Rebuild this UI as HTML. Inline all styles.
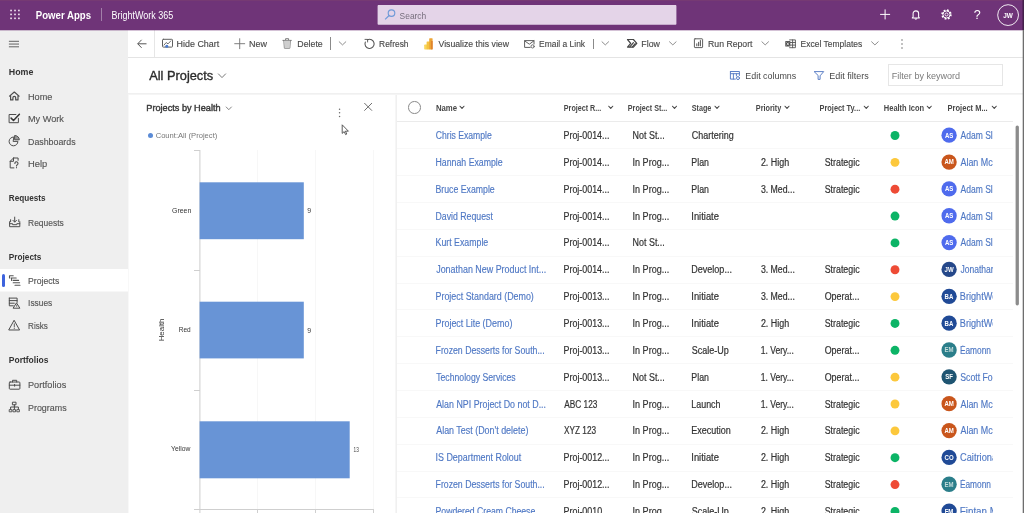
<!DOCTYPE html>
<html>
<head>
<meta charset="utf-8">
<title>All Projects</title>
<style>
*{box-sizing:border-box;margin:0;padding:0}
html,body{width:1024px;height:513px;overflow:hidden;background:#fff;font-family:"Liberation Sans",sans-serif;color:#444}
.a{position:absolute}
.t{position:absolute;white-space:nowrap;transform-origin:0 50%}
.clip{position:absolute;overflow:hidden}
svg{position:absolute;overflow:visible}
.dot{position:absolute;width:9px;height:9px;border-radius:50%}
.av{position:absolute;width:15.4px;height:15.4px;border-radius:50%;color:#fff;font-size:6.3px;font-weight:bold;display:flex;align-items:center;justify-content:center;letter-spacing:-0.25px;padding-top:0.6px}
.rs{position:absolute;left:397px;width:616px;height:1px;background:#f8f8f8}
.ch{position:absolute}
</style>
</head>
<body>
<!-- backgrounds -->
<div class="a" style="left:0;top:0;width:1024px;height:30px;background:#6f3478"></div>
<div class="a" style="left:0;top:30px;width:1024px;height:1px;background:rgba(111,52,120,0.3);z-index:3"></div>
<div class="a" style="left:0;top:30px;width:128px;height:483px;background:#efefef"></div>
<div class="a" style="left:128px;top:57px;width:896px;height:1px;background:#e4e4e4"></div>
<div class="a" style="left:128px;top:93px;width:896px;height:1px;background:#f0f0f0"></div>
<div class="a" style="left:128px;top:94px;width:896px;height:1px;background:#f5f5f5"></div>
<div class="a" style="left:128px;top:95px;width:1px;height:418px;background:#f8f8f8"></div>
<div class="a" style="left:395px;top:95px;width:1px;height:418px;background:#f6f6f6"></div>
<div class="a" style="left:396px;top:95px;width:1px;height:418px;background:#f0f0f0"></div>

<!-- right window edge -->
<div class="a" style="left:1023px;top:0;width:1px;height:30px;background:#43214a;z-index:5"></div>
<div class="a" style="left:1022px;top:0;width:1px;height:30px;background:rgba(40,10,45,0.3);z-index:5"></div>
<div class="a" style="left:1023px;top:30px;width:1px;height:483px;background:#6e6e6e;z-index:5"></div>
<div class="a" style="left:1022px;top:30px;width:1px;height:483px;background:rgba(110,110,110,0.3);z-index:5"></div>
<div class="a" style="left:0;top:0;width:1024px;height:1px;background:#763a73"></div>
<!-- HEADER shapes -->
<svg style="left:0;top:0" width="30" height="30" viewBox="0 0 30 30" fill="#f6ecf7"><rect x="10.25" y="9.70" width="1.6" height="1.6"/><rect x="14.20" y="9.70" width="1.6" height="1.6"/><rect x="18.10" y="9.70" width="1.6" height="1.6"/><rect x="10.25" y="13.60" width="1.6" height="1.6"/><rect x="14.20" y="13.60" width="1.6" height="1.6"/><rect x="18.10" y="13.60" width="1.6" height="1.6"/><rect x="10.25" y="17.55" width="1.6" height="1.6"/><rect x="14.20" y="17.55" width="1.6" height="1.6"/><rect x="18.10" y="17.55" width="1.6" height="1.6"/></svg>
<div class="a" style="left:101px;top:8px;width:1px;height:13px;background:#a27fa9"></div>
<svg style="left:377px;top:4px" width="301" height="22" viewBox="0 0 301 22"><rect x="0.6" y="1.1" width="298.8" height="19.6" rx="0.8" fill="#e4d4e8"/></svg>
<svg style="left:384px;top:8px" width="12" height="12" viewBox="0 0 12 12" fill="none" stroke="#6f9ad8" stroke-width="1.15"><circle cx="7.5" cy="5.1" r="3.3"/><path d="M5.1 7.5 L1.1 11.4"/></svg>
<svg style="left:879px;top:8px" width="13" height="13" viewBox="0 0 13 13" stroke="#fff" stroke-width="1" fill="none"><path d="M6.1 1.4V11.4M1.1 6.4H11.1"/></svg>
<svg style="left:910px;top:8px" width="12" height="13" viewBox="0 0 12 13" stroke="#fff" stroke-width="1.05" fill="none" stroke-linejoin="round"><path d="M3.1 9V5.6a2.75 2.75 0 0 1 5.5 0V9l0.8 0.9H2.3z"/><path d="M4.8 10.4a1.1 1.1 0 0 0 2.1 0"/></svg>
<svg style="left:940px;top:8px" width="13" height="13" viewBox="0 0 13 13" stroke="#fff" fill="none"><circle cx="6.5" cy="6.5" r="4.3" stroke-width="1.8" stroke-dasharray="1.7 1.68"/><circle cx="6.5" cy="6.5" r="3.6" stroke-width="1"/><circle cx="6.5" cy="6.5" r="1.5" stroke-width="0.9"/></svg>
<svg style="left:996px;top:3px" width="25" height="25" viewBox="0 0 25 25" fill="none" stroke="#fff" stroke-width="0.9"><circle cx="12.1" cy="12.1" r="10.4"/></svg>

<!-- SIDEBAR shapes -->
<svg style="left:8px;top:40px" width="13" height="9" viewBox="0 0 13 9" stroke="#5c5c5c" stroke-width="0.95"><path d="M0.9 1.3H11M0.9 4.05H11M0.9 6.8H11"/></svg>
<div class="a" style="left:0;top:269px;width:128px;height:22px;background:#fff"></div><div class="a" style="left:0;top:291px;width:128px;height:1px;background:#f7f7f7"></div>
<div class="a" style="left:2px;top:274px;width:3px;height:13px;background:#3d63dd;border-radius:1.5px"></div>
<svg style="left:9px;top:91px" width="12" height="12" viewBox="0 -0.2 12 12" stroke="#4d4d4d" stroke-width="1" fill="none" stroke-linejoin="round" stroke-linecap="round"><path d="M0.5 4.9L5.3 0.8L10.1 4.9M1.6 4.2V8.7H3.9V6.6A1.4 1.4 0 0 1 6.7 6.6V8.7H9V4.2" stroke-width="1.2"/></svg>
<svg style="left:8px;top:113px" width="14" height="13" viewBox="-0.5 -0.3 14 13" stroke="#4d4d4d" stroke-width="1" fill="none" stroke-linejoin="round" stroke-linecap="round"><path d="M9.9 5V9.4H0.6V1.2H7.4" stroke-width="1"/><path d="M2.6 4.8L5 7.2L10.9 1" stroke="#333" stroke-width="1.5"/></svg>
<svg style="left:8px;top:134px" width="14" height="14" viewBox="-0.7 -0.8 14 14" stroke="#4d4d4d" stroke-width="1" fill="none" stroke-linejoin="round" stroke-linecap="round"><path d="M4.8 2.2A4.4 4.4 0 1 0 9.2 6.6H4.8Z"/><path d="M6.3 0.7A4.3 4.3 0 0 1 10.6 5H6.3Z" fill="#999"/></svg>
<svg style="left:9px;top:157px" width="13" height="14" viewBox="-0.5 -0.3 13 14" stroke="#4d4d4d" stroke-width="1" fill="none" stroke-linejoin="round" stroke-linecap="round"><path d="M4 0.7H8.6V3M4 0.7L0.7 4V10.6H4.4M0.7 4H4V0.7"/><path d="M5.4 6.1A1.55 1.55 0 1 1 7.9 7.3C7.3 7.7 7 8 7 8.7M7 10.3V10.4" stroke-width="1.1"/></svg>
<svg style="left:9px;top:216px" width="13" height="13" viewBox="0 -0.5 13 13" stroke="#4d4d4d" stroke-width="1" fill="none" stroke-linejoin="round" stroke-linecap="round"><path d="M0.6 5.2V10.2H10.8V5.2M0.6 7.2H3.6V8.2H7.8V7.2H10.8M1.6 5.2V3.2M9.8 5.2V3.2"/><path d="M5.7 0.6V5.4M3.9 3.8L5.7 5.6L7.5 3.8"/></svg>
<svg style="left:9px;top:275px" width="13" height="13" viewBox="0 0 13 13" stroke="#555" stroke-width="1" fill="none" stroke-linejoin="round" stroke-linecap="round"><path d="M0.5 0.8H4.2M2 3H7.2M4.2 5.4H9.6M4.2 7.8H10.6M6 10.2H11M0.5 0.8V3M2.6 3V5.4" stroke-width="1.1"/></svg>
<svg style="left:8px;top:297px" width="14" height="14" viewBox="-0.7 -0.4 14 14" stroke="#4d4d4d" stroke-width="1" fill="none" stroke-linejoin="round" stroke-linecap="round"><path d="M0.6 0.7H8.4V5M0.6 0.7V8.4H4.6M0.6 3.2H8.4M0.6 5.8H5.6"/><path d="M8 5.8L11.2 10.8H4.8Z" fill="#efefef"/><path d="M8 7.6V9" stroke-width="0.8"/></svg>
<svg style="left:8px;top:319px" width="14" height="13" viewBox="-0.7 -0.8 14 13" stroke="#4d4d4d" stroke-width="1" fill="none" stroke-linejoin="round" stroke-linecap="round"><path d="M5.6 0.8L10.9 10.2H0.4Z"/><path d="M5.6 4V7.2M5.6 8.6V8.7" stroke-width="0.9"/></svg>
<svg style="left:8px;top:379px" width="14" height="12" viewBox="-0.7 -0.6 14 12" stroke="#4d4d4d" stroke-width="1" fill="none" stroke-linejoin="round" stroke-linecap="round"><rect x="0.6" y="2.4" width="10.6" height="7.2" rx="0.8"/><path d="M3.8 2.4V0.7H8V2.4M0.6 5.6H11.2M5.9 4.8V6.6"/></svg>
<svg style="left:9px;top:401px" width="13" height="13" viewBox="-0.2 -0.6 13 13" stroke="#4d4d4d" stroke-width="1" fill="none" stroke-linejoin="round" stroke-linecap="round"><rect x="3.6" y="0.6" width="3.2" height="2.6"/><path d="M5.2 3.2V5.4M1.4 7.6V5.4H9.2V7.6M5.2 5.4V7.6"/><path d="M0.4 8H2.6V10.2H0.4ZM4.1 8H6.3V10.2H4.1ZM8 8H10.2V10.2H8Z" stroke-width="0.9"/></svg>

<!-- COMMAND BAR shapes -->
<svg style="left:136.5px;top:39px" width="10" height="10" viewBox="0 0 10 10" stroke="#555" stroke-width="1" fill="none"><path d="M9.5 4.8H0.8M4.6 0.8L0.7 4.8L4.6 8.8"/></svg>
<div class="a" style="left:154px;top:30px;width:1px;height:27px;background:#e6e6e6"></div>
<div class="a" style="left:330px;top:37px;width:1px;height:13px;background:#8a8a8a"></div>
<div class="a" style="left:593px;top:39px;width:1px;height:10px;background:#8a8a8a"></div>
<svg style="left:162px;top:38px" width="12" height="11" viewBox="0 -0.7 12 11" stroke="#5f5f5f" stroke-width="1" fill="none" stroke-linejoin="round" stroke-linecap="round"><rect x="0.5" y="0.6" width="10" height="7.8" rx="0.8"/><path d="M2 6.4L4.2 3.8L6 5.2L8.8 2.2" stroke-width="0.9"/><circle cx="4.8" cy="7.6" r="1.5" fill="#4a7bd0" stroke="none"/></svg>
<svg style="left:234px;top:38px" width="12" height="12" viewBox="-0.4 -0.4 12 12" stroke="#707070" stroke-width="0.9" fill="none" stroke-linejoin="round" stroke-linecap="round"><path d="M5.3 0.3V10.3M0.3 5.3H10.3"/></svg>
<svg style="left:282px;top:37px" width="11" height="13" viewBox="-0.4 -0.8 11 13" stroke="#7a7a7a" stroke-width="1" fill="none" stroke-linejoin="round" stroke-linecap="round"><path d="M0.5 2.6H8.9M3.2 2.4V0.9H6.2V2.4M1.5 2.8L2 10.4H7.4L7.9 2.8" /><path d="M3.6 4.4V8.8M5.8 4.4V8.8" stroke-width="0.8"/><path d="M1.8 3H7.6L7.2 10.2H2.2Z" fill="#cfcfcf" stroke="none"/></svg>
<svg style="left:339px;top:41px" width="8" height="6" viewBox="-0 -0.6 8 6" stroke="#808080" stroke-width="0.9" fill="none" stroke-linejoin="round" stroke-linecap="round"><path d="M0.2 0.2L3.5 3.3000000000000003L6.8 0.2"/></svg>
<svg style="left:601px;top:41px" width="9" height="6" viewBox="-0.8 -0.6 9 6" stroke="#808080" stroke-width="0.9" fill="none" stroke-linejoin="round" stroke-linecap="round"><path d="M0.2 0.2L3.5 3.3000000000000003L6.8 0.2"/></svg>
<svg style="left:669px;top:41px" width="9" height="6" viewBox="-0.3 -0.6 9 6" stroke="#808080" stroke-width="0.9" fill="none" stroke-linejoin="round" stroke-linecap="round"><path d="M0.2 0.2L3.5 3.3000000000000003L6.8 0.2"/></svg>
<svg style="left:761px;top:41px" width="9" height="6" viewBox="-0.7 -0.6 9 6" stroke="#808080" stroke-width="0.9" fill="none" stroke-linejoin="round" stroke-linecap="round"><path d="M0.2 0.2L3.5 3.3000000000000003L6.8 0.2"/></svg>
<svg style="left:871px;top:41px" width="9" height="6" viewBox="-0.4 -0.6 9 6" stroke="#808080" stroke-width="0.9" fill="none" stroke-linejoin="round" stroke-linecap="round"><path d="M0.2 0.2L3.5 3.3000000000000003L6.8 0.2"/></svg>
<svg style="left:364px;top:38px" width="12" height="13" viewBox="0 -0.2 12 13" stroke="#555" stroke-width="1.1" fill="none" stroke-linejoin="round" stroke-linecap="round"><path d="M3.4 1.6A4.6 4.6 0 1 1 1.3 3.9" /><path d="M1 1.2H3.6V3.8" stroke-width="0.9"/></svg>
<svg style="left:424px;top:37.6px" width="9" height="11.6" viewBox="0 0 9 11.6"><rect x="0.2" y="6.6" width="3.2" height="4.8" rx="0.6" fill="#f9d65c"/><rect x="2.6" y="3.4" width="3.4" height="8" rx="0.6" fill="#f5c341"/><rect x="5.2" y="0.2" width="3.4" height="11.2" rx="0.6" fill="#eda534"/><rect x="7.2" y="3" width="1.4" height="8.4" fill="#dc7d2c"/></svg>
<svg style="left:524px;top:40px" width="12" height="10" viewBox="0 0 12 10" stroke="#5f5f5f" stroke-width="1" fill="none" stroke-linejoin="round" stroke-linecap="round"><path d="M10 4V0.6H0.6V7.4H6.2M0.6 0.8L5.3 4.2L10 0.8"/><circle cx="8.6" cy="6.4" r="1.6" fill="#fff" stroke-width="0.9"/></svg>
<svg style="left:626px;top:38px" width="13" height="11" viewBox="-0.8 -0.8 13 11" stroke="#454545" stroke-width="1.2" fill="none" stroke-linejoin="round" stroke-linecap="round"><path d="M0.7 0.7H6.6L10 4.5L6.6 8.3H0.7L3.9 4.5Z"/><path d="M3 8L6.6 3.8M5.6 8L8.4 4.8" /></svg>
<svg style="left:693px;top:38px" width="12" height="12" viewBox="-0.8 -0.2 12 12" stroke="#5f5f5f" stroke-width="1" fill="none" stroke-linejoin="round" stroke-linecap="round"><rect x="0.6" y="0.6" width="8.2" height="8.8" rx="0.6"/><path d="M3 7.6V5.6M4.8 7.6V4M6.6 7.6V2.4" stroke-width="1.1"/></svg>
<svg style="left:785px;top:39px" width="12" height="11" viewBox="0 -0.3 12 11" stroke="#555" stroke-width="1" fill="none" stroke-linejoin="round" stroke-linecap="round"><path d="M4.6 0.6H10.4V8.4H4.6M4.6 3.2H10.4M4.6 5.8H10.4M7.6 0.6V8.4" stroke-width="0.9"/><rect x="0.3" y="1.8" width="5" height="5.4" fill="#4a4a4a" stroke="none"/><path d="M1.8 3.4L3.8 5.8M3.8 3.4L1.8 5.8" stroke="#fff" stroke-width="0.7"/></svg>
<svg style="left:901px;top:38.6px" width="2" height="10" viewBox="0 0 2 10" fill="#666"><circle cx="1" cy="1" r="0.75"/><circle cx="1" cy="5" r="0.75"/><circle cx="1" cy="9" r="0.75"/></svg>

<!-- TITLE shapes -->
<div class="a" style="left:888px;top:64px;width:115px;height:22px;border:1px solid #e6e6e6;background:#fff"></div>
<svg style="left:218px;top:73px" width="9" height="6" viewBox="-0.2 -0.7 9 6" stroke="#6a6a6a" stroke-width="0.9" fill="none" stroke-linejoin="round" stroke-linecap="round"><path d="M0.2 0.2L3.8 3.9000000000000004L7.3999999999999995 0.2"/></svg>
<svg style="left:729px;top:70px" width="13" height="12" viewBox="-0.8 -0.9 13 12" stroke="#5d80c6" stroke-width="1" fill="none" stroke-linejoin="round" stroke-linecap="round"><path d="M0.6 0.6H9.6V4.6M0.6 0.6V8.2H5.6M0.6 2.8H9.6M3.6 2.8V8.2M6.6 2.8V5"/><circle cx="8.2" cy="7.2" r="1.5"/></svg>
<svg style="left:813px;top:71px" width="13" height="11" viewBox="-0.9 0 13 11" stroke="#5d80c6" stroke-width="1" fill="none" stroke-linejoin="round" stroke-linecap="round"><path d="M0.6 0.6H9.8L6.2 4.8V8.4H4.2V4.8Z"/></svg>

<!-- CHART -->
<div class="a" style="left:257px;top:150px;width:1px;height:359px;background:#f7f7f7"></div>
<div class="a" style="left:315px;top:150px;width:1px;height:359px;background:#f7f7f7"></div>
<div class="a" style="left:373px;top:150px;width:1px;height:359px;background:#f7f7f7"></div>
<svg style="left:190px;top:150px" width="20" height="363" viewBox="0 0 20 363"><rect x="9.4" y="0" width="1" height="363" fill="#cecece"/></svg>
<div class="a" style="left:194px;top:150px;width:6px;height:1px;background:#cfcfcf"></div>
<div class="a" style="left:194px;top:270px;width:6px;height:1px;background:#cfcfcf"></div>
<div class="a" style="left:194px;top:390px;width:6px;height:1px;background:#cfcfcf"></div>
<div class="a" style="left:194px;top:509px;width:180px;height:1px;background:#cfcfcf"></div>
<div class="a" style="left:257px;top:509px;width:1px;height:4px;background:#cfcfcf"></div>
<div class="a" style="left:315px;top:509px;width:1px;height:4px;background:#cfcfcf"></div>
<div class="a" style="left:373px;top:509px;width:1px;height:4px;background:#cfcfcf"></div>
<svg style="left:0;top:0" width="400" height="513" viewBox="0 0 400 513"><g fill="#6894d6"><rect x="199.6" y="182.3" width="104.2" height="56.9"/><rect x="199.6" y="301.7" width="104.2" height="56.7"/><rect x="199.6" y="421.3" width="150.1" height="57"/></g></svg>
<div class="a" style="left:147.5px;top:132.5px;width:5px;height:5px;border-radius:50%;background:#5b8bd6"></div>
<svg style="left:226px;top:106px" width="7" height="5" viewBox="-0 -0.8 7 5" stroke="#777" stroke-width="0.9" fill="none" stroke-linejoin="round" stroke-linecap="round"><path d="M0.2 0.2L2.8 2.9000000000000004L5.3999999999999995 0.2"/></svg>
<svg style="left:338px;top:108px" width="4" height="10" viewBox="0 0 4 10" fill="#6a6a6a"><circle cx="1.55" cy="1.35" r="0.75"/><circle cx="1.55" cy="4.8" r="0.75"/><circle cx="1.55" cy="8.4" r="0.75"/></svg>
<svg style="left:364px;top:103px" width="9" height="9" viewBox="-0.4 -0.1 9 9" stroke="#666" stroke-width="0.95" fill="none" stroke-linejoin="round" stroke-linecap="round"><path d="M0.2 0.2L7.3 7.3M7.3 0.2L0.2 7.3"/></svg>
<svg style="left:341px;top:124px" width="10" height="13" viewBox="-0.6 -0.6 10 13" stroke="#4a4a4a" stroke-width="0.9" fill="none" stroke-linejoin="round" stroke-linecap="round"><path d="M0.6 0.6V8.8L2.6 7L4 10L5.2 9.4L3.8 6.6H6.4Z" fill="#fff"/></svg>

<!-- GRID -->
<div class="a" style="left:397px;top:121px;width:616px;height:1px;background:#ebebeb"></div>
<div class="a" style="left:408px;top:101px;width:12.6px;height:12.6px;border:1px solid #8a8a8a;border-radius:50%"></div>
<svg style="left:1014px;top:124px" width="6" height="184" viewBox="0 0 6 184"><rect x="1.6" y="1.4" width="3.3" height="180" rx="1.6" fill="#8c8c8c"/></svg>
<svg style="left:459px;top:106px" width="7" height="4" viewBox="-0.8 -0.05 7 4" stroke="#444" stroke-width="1.1" fill="none" stroke-linejoin="round" stroke-linecap="round"><path d="M0.2 0.2L2.2 2.4000000000000004L4.2 0.2"/></svg>
<svg style="left:608px;top:106px" width="6" height="4" viewBox="-0.55 -0.05 6 4" stroke="#444" stroke-width="1.1" fill="none" stroke-linejoin="round" stroke-linecap="round"><path d="M0.2 0.2L2.2 2.4000000000000004L4.2 0.2"/></svg>
<svg style="left:672px;top:106px" width="6" height="4" viewBox="-0.3 -0.05 6 4" stroke="#444" stroke-width="1.1" fill="none" stroke-linejoin="round" stroke-linecap="round"><path d="M0.2 0.2L2.2 2.4000000000000004L4.2 0.2"/></svg>
<svg style="left:714px;top:106px" width="7" height="4" viewBox="-0.8 -0.05 7 4" stroke="#444" stroke-width="1.1" fill="none" stroke-linejoin="round" stroke-linecap="round"><path d="M0.2 0.2L2.2 2.4000000000000004L4.2 0.2"/></svg>
<svg style="left:784px;top:106px" width="7" height="4" viewBox="-0.8 -0.05 7 4" stroke="#444" stroke-width="1.1" fill="none" stroke-linejoin="round" stroke-linecap="round"><path d="M0.2 0.2L2.2 2.4000000000000004L4.2 0.2"/></svg>
<svg style="left:864px;top:106px" width="6" height="4" viewBox="-0.05 -0.05 6 4" stroke="#444" stroke-width="1.1" fill="none" stroke-linejoin="round" stroke-linecap="round"><path d="M0.2 0.2L2.2 2.4000000000000004L4.2 0.2"/></svg>
<svg style="left:927px;top:106px" width="6" height="4" viewBox="-0.05 -0.05 6 4" stroke="#444" stroke-width="1.1" fill="none" stroke-linejoin="round" stroke-linecap="round"><path d="M0.2 0.2L2.2 2.4000000000000004L4.2 0.2"/></svg>
<svg style="left:992px;top:106px" width="6" height="4" viewBox="-0.05 -0.05 6 4" stroke="#444" stroke-width="1.1" fill="none" stroke-linejoin="round" stroke-linecap="round"><path d="M0.2 0.2L2.2 2.4000000000000004L4.2 0.2"/></svg>
<div class="rs" style="top:148px"></div>
<div class="rs" style="top:175px"></div>
<div class="rs" style="top:202px"></div>
<div class="rs" style="top:229px"></div>
<div class="rs" style="top:256px"></div>
<div class="rs" style="top:283px"></div>
<div class="rs" style="top:309px"></div>
<div class="rs" style="top:336px"></div>
<div class="rs" style="top:363px"></div>
<div class="rs" style="top:390px"></div>
<div class="rs" style="top:417px"></div>
<div class="rs" style="top:444px"></div>
<div class="rs" style="top:471px"></div>
<div class="rs" style="top:497px"></div>
<svg style="left:0;top:0" width="1024" height="513" viewBox="0 0 1024 513"><circle cx="895" cy="135.50" r="4.45" fill="#0cb466"/><circle cx="949.1" cy="135.20" r="7.65" fill="#4f6bed"/><circle cx="895" cy="162.35" r="4.45" fill="#fcc83c"/><circle cx="949.1" cy="162.05" r="7.65" fill="#c9561c"/><circle cx="895" cy="189.20" r="4.45" fill="#ee4b35"/><circle cx="949.1" cy="188.90" r="7.65" fill="#4f6bed"/><circle cx="895" cy="216.05" r="4.45" fill="#0cb466"/><circle cx="949.1" cy="215.75" r="7.65" fill="#4f6bed"/><circle cx="895" cy="242.90" r="4.45" fill="#0cb466"/><circle cx="949.1" cy="242.60" r="7.65" fill="#4f6bed"/><circle cx="895" cy="269.75" r="4.45" fill="#ee4b35"/><circle cx="949.1" cy="269.45" r="7.65" fill="#25488a"/><circle cx="895" cy="296.60" r="4.45" fill="#fcc83c"/><circle cx="949.1" cy="296.30" r="7.65" fill="#204a96"/><circle cx="895" cy="323.45" r="4.45" fill="#0cb466"/><circle cx="949.1" cy="323.15" r="7.65" fill="#204a96"/><circle cx="895" cy="350.30" r="4.45" fill="#0cb466"/><circle cx="949.1" cy="350.00" r="7.65" fill="#2b7e8a"/><circle cx="895" cy="377.15" r="4.45" fill="#fcc83c"/><circle cx="949.1" cy="376.85" r="7.65" fill="#1f5572"/><circle cx="895" cy="404.00" r="4.45" fill="#fcc83c"/><circle cx="949.1" cy="403.70" r="7.65" fill="#c9561c"/><circle cx="895" cy="430.85" r="4.45" fill="#fcc83c"/><circle cx="949.1" cy="430.55" r="7.65" fill="#c9561c"/><circle cx="895" cy="457.70" r="4.45" fill="#0cb466"/><circle cx="949.1" cy="457.40" r="7.65" fill="#204a96"/><circle cx="895" cy="484.55" r="4.45" fill="#ee4b35"/><circle cx="949.1" cy="484.25" r="7.65" fill="#2b7e8a"/><circle cx="895" cy="511.40" r="4.45" fill="#0cb466"/><circle cx="949.1" cy="511.10" r="7.65" fill="#204a96"/></svg>

<div id="tx" style="position:absolute;left:0;top:0;width:1024px;height:513px;will-change:transform">
<div class="t" style="left:35px;top:9px;font-size:10.6px;line-height:12.72px;color:#ffffff;font-weight:bold;transform:translateX(0.82px) scaleX(0.9088);">Power Apps</div>
<div class="t" style="left:111px;top:10px;font-size:10.2px;line-height:12.24px;color:#ffffff;transform:translateX(0.54px) scaleX(0.8812);">BrightWork 365</div>
<div class="t" style="left:399px;top:10px;font-size:9.8px;line-height:11.76px;color:#776f7d;transform:translateX(0.57px) scaleX(0.8600);">Search</div>
<div class="t" style="left:973px;top:8px;font-size:12.5px;line-height:15.0px;color:#ffffff;transform:translateX(0.70px) scaleX(1.0000);">?</div>
<div class="t" style="left:1003px;top:12px;font-size:7.0px;line-height:8.4px;color:#ffffff;font-weight:bold;transform:translateX(0.17px) scaleX(0.9171);">JW</div>
<div class="t" style="left:8px;top:66px;font-size:9.6px;line-height:11.52px;color:#333333;font-weight:bold;transform:translateX(0.74px) scaleX(0.9231);">Home</div>
<div class="t" style="left:8px;top:192px;font-size:9.6px;line-height:11.52px;color:#333333;font-weight:bold;transform:translateX(0.78px) scaleX(0.8497);">Requests</div>
<div class="t" style="left:8px;top:251px;font-size:9.6px;line-height:11.52px;color:#333333;font-weight:bold;transform:translateX(0.77px) scaleX(0.8595);">Projects</div>
<div class="t" style="left:8px;top:354px;font-size:9.6px;line-height:11.52px;color:#333333;font-weight:bold;transform:translateX(0.76px) scaleX(0.8864);">Portfolios</div>
<div class="t" style="left:28px;top:91px;font-size:9.8px;line-height:11.76px;color:#555555;-webkit-text-stroke:0.15px #555555;transform:translateX(0.00px) scaleX(0.9320);">Home</div>
<div class="t" style="left:28px;top:113px;font-size:9.8px;line-height:11.76px;color:#555555;-webkit-text-stroke:0.15px #555555;transform:translateX(0.00px) scaleX(0.9325);">My Work</div>
<div class="t" style="left:28px;top:136px;font-size:9.8px;line-height:11.76px;color:#555555;-webkit-text-stroke:0.15px #555555;transform:translateX(0.02px) scaleX(0.9005);">Dashboards</div>
<div class="t" style="left:27px;top:158px;font-size:9.8px;line-height:11.76px;color:#555555;-webkit-text-stroke:0.15px #555555;transform:translateX(0.99px) scaleX(0.9526);">Help</div>
<div class="t" style="left:28px;top:217px;font-size:9.8px;line-height:11.76px;color:#555555;-webkit-text-stroke:0.15px #555555;transform:translateX(0.05px) scaleX(0.8617);">Requests</div>
<div class="t" style="left:28px;top:275px;font-size:9.8px;line-height:11.76px;color:#555555;-webkit-text-stroke:0.15px #555555;transform:translateX(0.04px) scaleX(0.8841);">Projects</div>
<div class="t" style="left:28px;top:297px;font-size:9.8px;line-height:11.76px;color:#555555;-webkit-text-stroke:0.15px #555555;transform:translateX(0.06px) scaleX(0.8550);">Issues</div>
<div class="t" style="left:28px;top:320px;font-size:9.8px;line-height:11.76px;color:#555555;-webkit-text-stroke:0.15px #555555;transform:translateX(0.08px) scaleX(0.8261);">Risks</div>
<div class="t" style="left:27px;top:379px;font-size:9.8px;line-height:11.76px;color:#555555;-webkit-text-stroke:0.15px #555555;transform:translateX(1.00px) scaleX(0.9358);">Portfolios</div>
<div class="t" style="left:28px;top:402px;font-size:9.8px;line-height:11.76px;color:#555555;-webkit-text-stroke:0.15px #555555;transform:translateX(0.02px) scaleX(0.9084);">Programs</div>
<div class="t" style="left:176px;top:38px;font-size:9.9px;line-height:11.88px;color:#484848;-webkit-text-stroke:0.15px #484848;transform:translateX(0.57px) scaleX(0.9032);">Hide Chart</div>
<div class="t" style="left:249px;top:38px;font-size:9.9px;line-height:11.88px;color:#484848;-webkit-text-stroke:0.15px #484848;transform:translateX(0.07px) scaleX(0.9091);">New</div>
<div class="t" style="left:297px;top:38px;font-size:9.9px;line-height:11.88px;color:#484848;-webkit-text-stroke:0.15px #484848;transform:translateX(0.33px) scaleX(0.8909);">Delete</div>
<div class="t" style="left:379px;top:38px;font-size:9.9px;line-height:11.88px;color:#484848;-webkit-text-stroke:0.15px #484848;transform:translateX(0.11px) scaleX(0.8496);">Refresh</div>
<div class="t" style="left:438px;top:38px;font-size:9.9px;line-height:11.88px;color:#484848;-webkit-text-stroke:0.15px #484848;transform:translateX(0.50px) scaleX(0.8812);">Visualize this view</div>
<div class="t" style="left:539px;top:38px;font-size:9.9px;line-height:11.88px;color:#484848;-webkit-text-stroke:0.15px #484848;transform:translateX(0.11px) scaleX(0.8545);">Email a Link</div>
<div class="t" style="left:641px;top:38px;font-size:9.9px;line-height:11.88px;color:#484848;-webkit-text-stroke:0.15px #484848;transform:translateX(0.33px) scaleX(0.8889);">Flow</div>
<div class="t" style="left:708px;top:38px;font-size:9.9px;line-height:11.88px;color:#484848;-webkit-text-stroke:0.15px #484848;transform:translateX(0.09px) scaleX(0.8794);">Run Report</div>
<div class="t" style="left:800px;top:38px;font-size:9.9px;line-height:11.88px;color:#484848;-webkit-text-stroke:0.15px #484848;transform:translateX(0.61px) scaleX(0.8587);">Excel Templates</div>
<div class="t" style="left:149px;top:68px;font-size:13.2px;line-height:15.84px;color:#2b2b2b;-webkit-text-stroke:0.35px #2b2b2b;transform:translateX(0.24px) scaleX(0.9697);">All Projects</div>
<div class="t" style="left:745px;top:70px;font-size:9.9px;line-height:11.88px;color:#484848;transform:translateX(0.32px) scaleX(0.9009);">Edit columns</div>
<div class="t" style="left:829px;top:70px;font-size:9.9px;line-height:11.88px;color:#484848;transform:translateX(0.32px) scaleX(0.9089);">Edit filters</div>
<div class="t" style="left:891px;top:70px;font-size:9.9px;line-height:11.88px;color:#7a7a7a;transform:translateX(0.81px) scaleX(0.9147);">Filter by keyword</div>
<div class="t" style="left:146px;top:103px;font-size:8.9px;line-height:10.68px;color:#3a3a3a;-webkit-text-stroke:0.4px #3a3a3a;transform:translateX(0.28px) scaleX(1.0316);">Projects by Health</div>
<div class="t" style="left:155px;top:131px;font-size:7.6px;line-height:9.12px;color:#777;transform:translateX(0.65px) scaleX(1.0000);">Count:All (Project)</div>
<div class="t" style="left:172px;top:207px;font-size:6.9px;line-height:8.28px;color:#333;transform:translateX(0.05px) scaleX(1.0054);">Green</div>
<div class="t" style="left:178px;top:326px;font-size:6.9px;line-height:8.28px;color:#333;transform:translateX(0.73px) scaleX(0.9447);">Red</div>
<div class="t" style="left:171px;top:445px;font-size:6.9px;line-height:8.28px;color:#333;transform:translateX(0.06px) scaleX(0.9795);">Yellow</div>
<div class="t" style="left:307px;top:207px;font-size:6.4px;line-height:7.68px;color:#444;transform:translateX(0.23px) scaleX(1.1000);">9</div>
<div class="t" style="left:307px;top:327px;font-size:6.4px;line-height:7.68px;color:#444;transform:translateX(0.23px) scaleX(1.1000);">9</div>
<div class="t" style="left:353px;top:446px;font-size:6.4px;line-height:7.68px;color:#444;transform:translateX(0.53px) scaleX(0.7385);">13</div>
<div class="t" style="left:0;top:0;font-size:7.2px;line-height:8.64px;color:#333;transform-origin:0 0;transform:translate(158.08px,341.35px) rotate(-90deg) scaleX(1.0987);">Health</div>
<div class="t" style="left:435px;top:104px;font-size:8.3px;line-height:9.96px;color:#484848;font-weight:bold;transform:translateX(0.93px) scaleX(0.9364);">Name</div>
<div class="t" style="left:563px;top:104px;font-size:8.3px;line-height:9.96px;color:#484848;font-weight:bold;transform:translateX(0.82px) scaleX(0.8639);">Project R...</div>
<div class="t" style="left:627px;top:104px;font-size:8.3px;line-height:9.96px;color:#484848;font-weight:bold;transform:translateX(0.82px) scaleX(0.8652);">Project St...</div>
<div class="t" style="left:691px;top:104px;font-size:8.3px;line-height:9.96px;color:#484848;font-weight:bold;transform:translateX(0.78px) scaleX(0.8652);">Stage</div>
<div class="t" style="left:755px;top:104px;font-size:8.3px;line-height:9.96px;color:#484848;font-weight:bold;transform:translateX(0.81px) scaleX(0.8772);">Priority</div>
<div class="t" style="left:819px;top:104px;font-size:8.3px;line-height:9.96px;color:#484848;font-weight:bold;transform:translateX(0.56px) scaleX(0.8883);">Project Ty...</div>
<div class="t" style="left:883px;top:104px;font-size:8.3px;line-height:9.96px;color:#484848;font-weight:bold;transform:translateX(0.80px) scaleX(0.9029);">Health Icon</div>
<div class="t" style="left:947px;top:104px;font-size:8.3px;line-height:9.96px;color:#484848;font-weight:bold;transform:translateX(0.55px) scaleX(0.9075);">Project M...</div>
<div class="t" style="left:435px;top:130px;font-size:10.0px;line-height:12.0px;color:#4f78c4;-webkit-text-stroke:0.15px #4f78c4;transform:translateX(0.77px) scaleX(0.8607);">Chris Example</div>
<div class="t" style="left:563px;top:130px;font-size:10.0px;line-height:12.0px;color:#333333;-webkit-text-stroke:0.2px #333333;transform:translateX(0.59px) scaleX(0.8856);">Proj-0014...</div>
<div class="t" style="left:632px;top:130px;font-size:10.0px;line-height:12.0px;color:#333333;-webkit-text-stroke:0.2px #333333;transform:translateX(0.58px) scaleX(0.8921);">Not St...</div>
<div class="t" style="left:691px;top:130px;font-size:10.0px;line-height:12.0px;color:#333333;-webkit-text-stroke:0.2px #333333;transform:translateX(0.78px) scaleX(0.8967);">Chartering</div>
<div class="t" style="left:944px;top:132px;font-size:6.5px;line-height:7.8px;color:#ffffff;font-weight:bold;transform:translateX(0.92px) scaleX(0.9300);">AS</div>
<div class="clip" style="left:960px;top:130px;width:32.60px;height:12.0px"><div class="t" style="left:0px;top:0px;font-size:10.0px;line-height:12.0px;color:#4f78c4;-webkit-text-stroke:0.15px #4f78c4;transform:translateX(0.50px) scaleX(0.8523);">Adam Sloan</div></div>
<div class="t" style="left:435px;top:157px;font-size:10.0px;line-height:12.0px;color:#4f78c4;-webkit-text-stroke:0.15px #4f78c4;transform:translateX(0.54px) scaleX(0.8752);">Hannah Example</div>
<div class="t" style="left:563px;top:157px;font-size:10.0px;line-height:12.0px;color:#333333;-webkit-text-stroke:0.2px #333333;transform:translateX(0.59px) scaleX(0.8856);">Proj-0014...</div>
<div class="t" style="left:632px;top:157px;font-size:10.0px;line-height:12.0px;color:#333333;-webkit-text-stroke:0.2px #333333;transform:translateX(0.57px) scaleX(0.9038);">In Prog...</div>
<div class="t" style="left:691px;top:157px;font-size:10.0px;line-height:12.0px;color:#333333;-webkit-text-stroke:0.2px #333333;transform:translateX(0.34px) scaleX(0.8800);">Plan</div>
<div class="t" style="left:760px;top:157px;font-size:10.0px;line-height:12.0px;color:#333333;-webkit-text-stroke:0.2px #333333;transform:translateX(0.88px) scaleX(0.8935);">2. High</div>
<div class="t" style="left:824px;top:157px;font-size:10.0px;line-height:12.0px;color:#333333;-webkit-text-stroke:0.2px #333333;transform:translateX(0.68px) scaleX(0.8846);">Strategic</div>
<div class="t" style="left:944px;top:158px;font-size:6.5px;line-height:7.8px;color:#ffffff;font-weight:bold;transform:translateX(0.45px) scaleX(0.9300);">AM</div>
<div class="clip" style="left:960px;top:157px;width:32.60px;height:12.0px"><div class="t" style="left:0px;top:0px;font-size:10.0px;line-height:12.0px;color:#4f78c4;-webkit-text-stroke:0.15px #4f78c4;transform:translateX(0.50px) scaleX(0.8889);">Alan McGrath</div></div>
<div class="t" style="left:435px;top:184px;font-size:10.0px;line-height:12.0px;color:#4f78c4;-webkit-text-stroke:0.15px #4f78c4;transform:translateX(0.55px) scaleX(0.8719);">Bruce Example</div>
<div class="t" style="left:563px;top:184px;font-size:10.0px;line-height:12.0px;color:#333333;-webkit-text-stroke:0.2px #333333;transform:translateX(0.59px) scaleX(0.8856);">Proj-0014...</div>
<div class="t" style="left:632px;top:184px;font-size:10.0px;line-height:12.0px;color:#333333;-webkit-text-stroke:0.2px #333333;transform:translateX(0.57px) scaleX(0.9038);">In Prog...</div>
<div class="t" style="left:691px;top:184px;font-size:10.0px;line-height:12.0px;color:#333333;-webkit-text-stroke:0.2px #333333;transform:translateX(0.34px) scaleX(0.8800);">Plan</div>
<div class="t" style="left:760px;top:184px;font-size:10.0px;line-height:12.0px;color:#333333;-webkit-text-stroke:0.2px #333333;transform:translateX(0.88px) scaleX(0.8737);">3. Med...</div>
<div class="t" style="left:824px;top:184px;font-size:10.0px;line-height:12.0px;color:#333333;-webkit-text-stroke:0.2px #333333;transform:translateX(0.68px) scaleX(0.8846);">Strategic</div>
<div class="t" style="left:944px;top:185px;font-size:6.5px;line-height:7.8px;color:#ffffff;font-weight:bold;transform:translateX(0.92px) scaleX(0.9300);">AS</div>
<div class="clip" style="left:960px;top:184px;width:32.60px;height:12.0px"><div class="t" style="left:0px;top:0px;font-size:10.0px;line-height:12.0px;color:#4f78c4;-webkit-text-stroke:0.15px #4f78c4;transform:translateX(0.50px) scaleX(0.8523);">Adam Sloan</div></div>
<div class="t" style="left:435px;top:211px;font-size:10.0px;line-height:12.0px;color:#4f78c4;-webkit-text-stroke:0.15px #4f78c4;transform:translateX(0.54px) scaleX(0.8738);">David Request</div>
<div class="t" style="left:563px;top:211px;font-size:10.0px;line-height:12.0px;color:#333333;-webkit-text-stroke:0.2px #333333;transform:translateX(0.59px) scaleX(0.8856);">Proj-0014...</div>
<div class="t" style="left:632px;top:211px;font-size:10.0px;line-height:12.0px;color:#333333;-webkit-text-stroke:0.2px #333333;transform:translateX(0.57px) scaleX(0.9038);">In Prog...</div>
<div class="t" style="left:691px;top:211px;font-size:10.0px;line-height:12.0px;color:#333333;-webkit-text-stroke:0.2px #333333;transform:translateX(0.30px) scaleX(0.9368);">Initiate</div>
<div class="t" style="left:944px;top:212px;font-size:6.5px;line-height:7.8px;color:#ffffff;font-weight:bold;transform:translateX(0.92px) scaleX(0.9300);">AS</div>
<div class="clip" style="left:960px;top:211px;width:32.60px;height:12.0px"><div class="t" style="left:0px;top:0px;font-size:10.0px;line-height:12.0px;color:#4f78c4;-webkit-text-stroke:0.15px #4f78c4;transform:translateX(0.50px) scaleX(0.8523);">Adam Sloan</div></div>
<div class="t" style="left:435px;top:237px;font-size:10.0px;line-height:12.0px;color:#4f78c4;-webkit-text-stroke:0.15px #4f78c4;transform:translateX(0.54px) scaleX(0.8780);">Kurt Example</div>
<div class="t" style="left:563px;top:237px;font-size:10.0px;line-height:12.0px;color:#333333;-webkit-text-stroke:0.2px #333333;transform:translateX(0.59px) scaleX(0.8856);">Proj-0014...</div>
<div class="t" style="left:632px;top:237px;font-size:10.0px;line-height:12.0px;color:#333333;-webkit-text-stroke:0.2px #333333;transform:translateX(0.58px) scaleX(0.8921);">Not St...</div>
<div class="t" style="left:944px;top:239px;font-size:6.5px;line-height:7.8px;color:#ffffff;font-weight:bold;transform:translateX(0.92px) scaleX(0.9300);">AS</div>
<div class="clip" style="left:960px;top:237px;width:32.60px;height:12.0px"><div class="t" style="left:0px;top:0px;font-size:10.0px;line-height:12.0px;color:#4f78c4;-webkit-text-stroke:0.15px #4f78c4;transform:translateX(0.50px) scaleX(0.8523);">Adam Sloan</div></div>
<div class="t" style="left:436px;top:264px;font-size:10.0px;line-height:12.0px;color:#4f78c4;-webkit-text-stroke:0.15px #4f78c4;transform:translateX(0.20px) scaleX(0.8912);">Jonathan New Product Int...</div>
<div class="t" style="left:563px;top:264px;font-size:10.0px;line-height:12.0px;color:#333333;-webkit-text-stroke:0.2px #333333;transform:translateX(0.59px) scaleX(0.8856);">Proj-0014...</div>
<div class="t" style="left:632px;top:264px;font-size:10.0px;line-height:12.0px;color:#333333;-webkit-text-stroke:0.2px #333333;transform:translateX(0.57px) scaleX(0.9038);">In Prog...</div>
<div class="t" style="left:691px;top:264px;font-size:10.0px;line-height:12.0px;color:#333333;-webkit-text-stroke:0.2px #333333;transform:translateX(0.32px) scaleX(0.9011);">Develop...</div>
<div class="t" style="left:760px;top:264px;font-size:10.0px;line-height:12.0px;color:#333333;-webkit-text-stroke:0.2px #333333;transform:translateX(0.88px) scaleX(0.8737);">3. Med...</div>
<div class="t" style="left:824px;top:264px;font-size:10.0px;line-height:12.0px;color:#333333;-webkit-text-stroke:0.2px #333333;transform:translateX(0.68px) scaleX(0.8846);">Strategic</div>
<div class="t" style="left:944px;top:266px;font-size:6.5px;line-height:7.8px;color:#ffffff;font-weight:bold;transform:translateX(0.57px) scaleX(0.9300);">JW</div>
<div class="clip" style="left:960px;top:264px;width:32.60px;height:12.0px"><div class="t" style="left:0px;top:0px;font-size:10.0px;line-height:12.0px;color:#4f78c4;-webkit-text-stroke:0.15px #4f78c4;transform:translateX(0.50px) scaleX(0.8531);">Jonathan Weisglass</div></div>
<div class="t" style="left:435px;top:291px;font-size:10.0px;line-height:12.0px;color:#4f78c4;-webkit-text-stroke:0.15px #4f78c4;transform:translateX(0.53px) scaleX(0.8888);">Project Standard (Demo)</div>
<div class="t" style="left:563px;top:291px;font-size:10.0px;line-height:12.0px;color:#333333;-webkit-text-stroke:0.2px #333333;transform:translateX(0.58px) scaleX(0.8886);">Proj-0013...</div>
<div class="t" style="left:632px;top:291px;font-size:10.0px;line-height:12.0px;color:#333333;-webkit-text-stroke:0.2px #333333;transform:translateX(0.57px) scaleX(0.9038);">In Prog...</div>
<div class="t" style="left:691px;top:291px;font-size:10.0px;line-height:12.0px;color:#333333;-webkit-text-stroke:0.2px #333333;transform:translateX(0.30px) scaleX(0.9368);">Initiate</div>
<div class="t" style="left:760px;top:291px;font-size:10.0px;line-height:12.0px;color:#333333;-webkit-text-stroke:0.2px #333333;transform:translateX(0.88px) scaleX(0.8737);">3. Med...</div>
<div class="t" style="left:824px;top:291px;font-size:10.0px;line-height:12.0px;color:#333333;-webkit-text-stroke:0.2px #333333;transform:translateX(0.68px) scaleX(0.8921);">Operat...</div>
<div class="t" style="left:944px;top:293px;font-size:6.5px;line-height:7.8px;color:#ffffff;font-weight:bold;transform:translateX(0.57px) scaleX(0.9300);">BA</div>
<div class="clip" style="left:959px;top:291px;width:33.60px;height:12.0px"><div class="t" style="left:0px;top:0px;font-size:10.0px;line-height:12.0px;color:#4f78c4;-webkit-text-stroke:0.15px #4f78c4;transform:translateX(0.81px) scaleX(0.9143);">BrightWork Admin</div></div>
<div class="t" style="left:435px;top:318px;font-size:10.0px;line-height:12.0px;color:#4f78c4;-webkit-text-stroke:0.15px #4f78c4;transform:translateX(0.53px) scaleX(0.8918);">Project Lite (Demo)</div>
<div class="t" style="left:563px;top:318px;font-size:10.0px;line-height:12.0px;color:#333333;-webkit-text-stroke:0.2px #333333;transform:translateX(0.58px) scaleX(0.8886);">Proj-0013...</div>
<div class="t" style="left:632px;top:318px;font-size:10.0px;line-height:12.0px;color:#333333;-webkit-text-stroke:0.2px #333333;transform:translateX(0.57px) scaleX(0.9038);">In Prog...</div>
<div class="t" style="left:691px;top:318px;font-size:10.0px;line-height:12.0px;color:#333333;-webkit-text-stroke:0.2px #333333;transform:translateX(0.30px) scaleX(0.9368);">Initiate</div>
<div class="t" style="left:760px;top:318px;font-size:10.0px;line-height:12.0px;color:#333333;-webkit-text-stroke:0.2px #333333;transform:translateX(0.88px) scaleX(0.8935);">2. High</div>
<div class="t" style="left:824px;top:318px;font-size:10.0px;line-height:12.0px;color:#333333;-webkit-text-stroke:0.2px #333333;transform:translateX(0.68px) scaleX(0.8846);">Strategic</div>
<div class="t" style="left:944px;top:320px;font-size:6.5px;line-height:7.8px;color:#ffffff;font-weight:bold;transform:translateX(0.57px) scaleX(0.9300);">BA</div>
<div class="clip" style="left:959px;top:318px;width:33.60px;height:12.0px"><div class="t" style="left:0px;top:0px;font-size:10.0px;line-height:12.0px;color:#4f78c4;-webkit-text-stroke:0.15px #4f78c4;transform:translateX(0.81px) scaleX(0.9143);">BrightWork Admin</div></div>
<div class="t" style="left:435px;top:345px;font-size:10.0px;line-height:12.0px;color:#4f78c4;-webkit-text-stroke:0.15px #4f78c4;transform:translateX(0.55px) scaleX(0.8729);">Frozen Desserts for South...</div>
<div class="t" style="left:563px;top:345px;font-size:10.0px;line-height:12.0px;color:#333333;-webkit-text-stroke:0.2px #333333;transform:translateX(0.58px) scaleX(0.8886);">Proj-0013...</div>
<div class="t" style="left:632px;top:345px;font-size:10.0px;line-height:12.0px;color:#333333;-webkit-text-stroke:0.2px #333333;transform:translateX(0.57px) scaleX(0.9038);">In Prog...</div>
<div class="t" style="left:691px;top:345px;font-size:10.0px;line-height:12.0px;color:#333333;-webkit-text-stroke:0.2px #333333;transform:translateX(0.77px) scaleX(0.9012);">Scale-Up</div>
<div class="t" style="left:760px;top:345px;font-size:10.0px;line-height:12.0px;color:#333333;-webkit-text-stroke:0.2px #333333;transform:translateX(0.67px) scaleX(0.8560);">1. Very...</div>
<div class="t" style="left:824px;top:345px;font-size:10.0px;line-height:12.0px;color:#333333;-webkit-text-stroke:0.2px #333333;transform:translateX(0.68px) scaleX(0.8921);">Operat...</div>
<div class="t" style="left:944px;top:346px;font-size:6.5px;line-height:7.8px;color:#c3dbda;font-weight:bold;transform:translateX(0.57px) scaleX(0.9300);">EM</div>
<div class="clip" style="left:959px;top:345px;width:33.60px;height:12.0px"><div class="t" style="left:0px;top:0px;font-size:10.0px;line-height:12.0px;color:#4f78c4;-webkit-text-stroke:0.15px #4f78c4;transform:translateX(0.88px) scaleX(0.8333);">Éamonn McGuinness</div></div>
<div class="t" style="left:436px;top:372px;font-size:10.0px;line-height:12.0px;color:#4f78c4;-webkit-text-stroke:0.15px #4f78c4;transform:translateX(0.20px) scaleX(0.8667);">Technology Services</div>
<div class="t" style="left:563px;top:372px;font-size:10.0px;line-height:12.0px;color:#333333;-webkit-text-stroke:0.2px #333333;transform:translateX(0.58px) scaleX(0.8886);">Proj-0013...</div>
<div class="t" style="left:632px;top:372px;font-size:10.0px;line-height:12.0px;color:#333333;-webkit-text-stroke:0.2px #333333;transform:translateX(0.58px) scaleX(0.8921);">Not St...</div>
<div class="t" style="left:691px;top:372px;font-size:10.0px;line-height:12.0px;color:#333333;-webkit-text-stroke:0.2px #333333;transform:translateX(0.34px) scaleX(0.8800);">Plan</div>
<div class="t" style="left:760px;top:372px;font-size:10.0px;line-height:12.0px;color:#333333;-webkit-text-stroke:0.2px #333333;transform:translateX(0.67px) scaleX(0.8560);">1. Very...</div>
<div class="t" style="left:824px;top:372px;font-size:10.0px;line-height:12.0px;color:#333333;-webkit-text-stroke:0.2px #333333;transform:translateX(0.68px) scaleX(0.8921);">Operat...</div>
<div class="t" style="left:945px;top:373px;font-size:6.5px;line-height:7.8px;color:#ffffff;font-weight:bold;transform:translateX(0.26px) scaleX(0.9300);">SF</div>
<div class="clip" style="left:960px;top:372px;width:32.60px;height:12.0px"><div class="t" style="left:0px;top:0px;font-size:10.0px;line-height:12.0px;color:#4f78c4;-webkit-text-stroke:0.15px #4f78c4;transform:translateX(0.28px) scaleX(0.8707);">Scott Footlik</div></div>
<div class="t" style="left:436px;top:399px;font-size:10.0px;line-height:12.0px;color:#4f78c4;-webkit-text-stroke:0.15px #4f78c4;transform:translateX(0.20px) scaleX(0.8860);">Alan NPI Project Do not D...</div>
<div class="t" style="left:564px;top:399px;font-size:10.0px;line-height:12.0px;color:#333333;-webkit-text-stroke:0.2px #333333;transform:translateX(0.25px) scaleX(0.8289);">ABC 123</div>
<div class="t" style="left:632px;top:399px;font-size:10.0px;line-height:12.0px;color:#333333;-webkit-text-stroke:0.2px #333333;transform:translateX(0.57px) scaleX(0.9038);">In Prog...</div>
<div class="t" style="left:691px;top:399px;font-size:10.0px;line-height:12.0px;color:#333333;-webkit-text-stroke:0.2px #333333;transform:translateX(0.33px) scaleX(0.8889);">Launch</div>
<div class="t" style="left:760px;top:399px;font-size:10.0px;line-height:12.0px;color:#333333;-webkit-text-stroke:0.2px #333333;transform:translateX(0.67px) scaleX(0.8560);">1. Very...</div>
<div class="t" style="left:824px;top:399px;font-size:10.0px;line-height:12.0px;color:#333333;-webkit-text-stroke:0.2px #333333;transform:translateX(0.68px) scaleX(0.8846);">Strategic</div>
<div class="t" style="left:944px;top:400px;font-size:6.5px;line-height:7.8px;color:#ffffff;font-weight:bold;transform:translateX(0.45px) scaleX(0.9300);">AM</div>
<div class="clip" style="left:960px;top:399px;width:32.60px;height:12.0px"><div class="t" style="left:0px;top:0px;font-size:10.0px;line-height:12.0px;color:#4f78c4;-webkit-text-stroke:0.15px #4f78c4;transform:translateX(0.50px) scaleX(0.8889);">Alan McGrath</div></div>
<div class="t" style="left:436px;top:425px;font-size:10.0px;line-height:12.0px;color:#4f78c4;-webkit-text-stroke:0.15px #4f78c4;transform:translateX(0.20px) scaleX(0.8913);">Alan Test (Don't delete)</div>
<div class="t" style="left:564px;top:425px;font-size:10.0px;line-height:12.0px;color:#333333;-webkit-text-stroke:0.2px #333333;transform:translateX(0.04px) scaleX(0.8247);">XYZ 123</div>
<div class="t" style="left:632px;top:425px;font-size:10.0px;line-height:12.0px;color:#333333;-webkit-text-stroke:0.2px #333333;transform:translateX(0.57px) scaleX(0.9038);">In Prog...</div>
<div class="t" style="left:691px;top:425px;font-size:10.0px;line-height:12.0px;color:#333333;-webkit-text-stroke:0.2px #333333;transform:translateX(0.32px) scaleX(0.9006);">Execution</div>
<div class="t" style="left:760px;top:425px;font-size:10.0px;line-height:12.0px;color:#333333;-webkit-text-stroke:0.2px #333333;transform:translateX(0.88px) scaleX(0.8935);">2. High</div>
<div class="t" style="left:824px;top:425px;font-size:10.0px;line-height:12.0px;color:#333333;-webkit-text-stroke:0.2px #333333;transform:translateX(0.68px) scaleX(0.8846);">Strategic</div>
<div class="t" style="left:944px;top:427px;font-size:6.5px;line-height:7.8px;color:#ffffff;font-weight:bold;transform:translateX(0.45px) scaleX(0.9300);">AM</div>
<div class="clip" style="left:960px;top:425px;width:32.60px;height:12.0px"><div class="t" style="left:0px;top:0px;font-size:10.0px;line-height:12.0px;color:#4f78c4;-webkit-text-stroke:0.15px #4f78c4;transform:translateX(0.50px) scaleX(0.8889);">Alan McGrath</div></div>
<div class="t" style="left:435px;top:452px;font-size:10.0px;line-height:12.0px;color:#4f78c4;-webkit-text-stroke:0.15px #4f78c4;transform:translateX(0.53px) scaleX(0.8911);">IS Department Rolout</div>
<div class="t" style="left:563px;top:452px;font-size:10.0px;line-height:12.0px;color:#333333;-webkit-text-stroke:0.2px #333333;transform:translateX(0.58px) scaleX(0.8886);">Proj-0012...</div>
<div class="t" style="left:632px;top:452px;font-size:10.0px;line-height:12.0px;color:#333333;-webkit-text-stroke:0.2px #333333;transform:translateX(0.57px) scaleX(0.9038);">In Prog...</div>
<div class="t" style="left:691px;top:452px;font-size:10.0px;line-height:12.0px;color:#333333;-webkit-text-stroke:0.2px #333333;transform:translateX(0.30px) scaleX(0.9368);">Initiate</div>
<div class="t" style="left:760px;top:452px;font-size:10.0px;line-height:12.0px;color:#333333;-webkit-text-stroke:0.2px #333333;transform:translateX(0.88px) scaleX(0.8935);">2. High</div>
<div class="t" style="left:824px;top:452px;font-size:10.0px;line-height:12.0px;color:#333333;-webkit-text-stroke:0.2px #333333;transform:translateX(0.68px) scaleX(0.8846);">Strategic</div>
<div class="t" style="left:944px;top:454px;font-size:6.5px;line-height:7.8px;color:#ffffff;font-weight:bold;transform:translateX(0.57px) scaleX(0.9300);">CO</div>
<div class="clip" style="left:960px;top:452px;width:32.60px;height:12.0px"><div class="t" style="left:0px;top:0px;font-size:10.0px;line-height:12.0px;color:#4f78c4;-webkit-text-stroke:0.15px #4f78c4;transform:translateX(0.04px) scaleX(0.9254);">Caitriona O’Connor</div></div>
<div class="t" style="left:435px;top:479px;font-size:10.0px;line-height:12.0px;color:#4f78c4;-webkit-text-stroke:0.15px #4f78c4;transform:translateX(0.55px) scaleX(0.8729);">Frozen Desserts for South...</div>
<div class="t" style="left:563px;top:479px;font-size:10.0px;line-height:12.0px;color:#333333;-webkit-text-stroke:0.2px #333333;transform:translateX(0.58px) scaleX(0.8886);">Proj-0012...</div>
<div class="t" style="left:632px;top:479px;font-size:10.0px;line-height:12.0px;color:#333333;-webkit-text-stroke:0.2px #333333;transform:translateX(0.57px) scaleX(0.9038);">In Prog...</div>
<div class="t" style="left:691px;top:479px;font-size:10.0px;line-height:12.0px;color:#333333;-webkit-text-stroke:0.2px #333333;transform:translateX(0.32px) scaleX(0.9011);">Develop...</div>
<div class="t" style="left:760px;top:479px;font-size:10.0px;line-height:12.0px;color:#333333;-webkit-text-stroke:0.2px #333333;transform:translateX(0.88px) scaleX(0.8935);">2. High</div>
<div class="t" style="left:824px;top:479px;font-size:10.0px;line-height:12.0px;color:#333333;-webkit-text-stroke:0.2px #333333;transform:translateX(0.68px) scaleX(0.8846);">Strategic</div>
<div class="t" style="left:944px;top:481px;font-size:6.5px;line-height:7.8px;color:#c3dbda;font-weight:bold;transform:translateX(0.57px) scaleX(0.9300);">EM</div>
<div class="clip" style="left:959px;top:479px;width:33.60px;height:12.0px"><div class="t" style="left:0px;top:0px;font-size:10.0px;line-height:12.0px;color:#4f78c4;-webkit-text-stroke:0.15px #4f78c4;transform:translateX(0.88px) scaleX(0.8333);">Éamonn McGuinness</div></div>
<div class="t" style="left:435px;top:506px;font-size:10.0px;line-height:12.0px;color:#4f78c4;-webkit-text-stroke:0.15px #4f78c4;transform:translateX(0.55px) scaleX(0.8667);">Powdered Cream Cheese</div>
<div class="t" style="left:563px;top:506px;font-size:10.0px;line-height:12.0px;color:#333333;-webkit-text-stroke:0.2px #333333;transform:translateX(0.58px) scaleX(0.8886);">Proj-0010...</div>
<div class="t" style="left:632px;top:506px;font-size:10.0px;line-height:12.0px;color:#333333;-webkit-text-stroke:0.2px #333333;transform:translateX(0.57px) scaleX(0.9038);">In Prog...</div>
<div class="t" style="left:691px;top:506px;font-size:10.0px;line-height:12.0px;color:#333333;-webkit-text-stroke:0.2px #333333;transform:translateX(0.77px) scaleX(0.9012);">Scale-Up</div>
<div class="t" style="left:760px;top:506px;font-size:10.0px;line-height:12.0px;color:#333333;-webkit-text-stroke:0.2px #333333;transform:translateX(0.88px) scaleX(0.8935);">2. High</div>
<div class="t" style="left:824px;top:506px;font-size:10.0px;line-height:12.0px;color:#333333;-webkit-text-stroke:0.2px #333333;transform:translateX(0.68px) scaleX(0.8846);">Strategic</div>
<div class="t" style="left:944px;top:508px;font-size:6.5px;line-height:7.8px;color:#ffffff;font-weight:bold;transform:translateX(0.68px) scaleX(0.9300);">FM</div>
<div class="clip" style="left:959px;top:506px;width:33.60px;height:12.0px"><div class="t" style="left:0px;top:0px;font-size:10.0px;line-height:12.0px;color:#4f78c4;-webkit-text-stroke:0.15px #4f78c4;transform:translateX(0.76px) scaleX(0.9811);">Fintan Moran</div></div>
</div>
</body>
</html>
